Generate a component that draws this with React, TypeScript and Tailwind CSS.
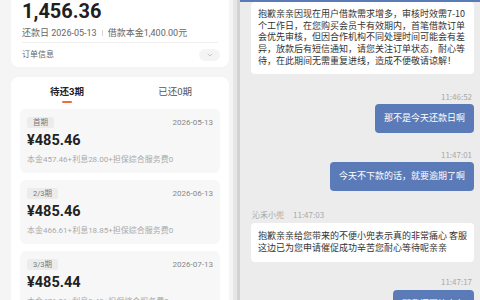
import { ChevronDown } from 'lucide-react'

const items = [
  { tag: '首期', date: '2026-05-13', amount: '¥485.46', detail: '本金457.46+利息28.00+担保综合服务费0' },
  { tag: '2/3期', date: '2026-06-13', amount: '¥485.46', detail: '本金466.61+利息18.85+担保综合服务费0' },
  { tag: '3/3期', date: '2026-07-13', amount: '¥485.44', detail: '本金476.01+利息9.43+担保综合服务费0' },
]

const firstMsg = [
  '抱歉亲亲因现在用户借款需求增多，审核时效需7-10',
  '个工作日，在您购买会员卡有效期内，首笔借款订单',
  '会优先审核，但因合作机构不同处理时间可能会有差',
  '异，放款后有短信通知，请您关注订单状态，耐心等',
  '待，在此期间无需重复进线，造成不便敬请谅解！',
]

function Stamp({ t }: { t: string }) {
  return <div className="text-right text-[8px] leading-[10px] text-[#a8a8a8] pr-[2px]">{t}</div>
}

function Mine({ text, cls }: { text: string; cls: string }) {
  return (
    <div className="flex justify-end">
      <div className={`bg-[#5b7bb8] text-white text-[9px] rounded-[4px] px-[9px] h-[29px] flex items-center whitespace-nowrap ${cls}`}>
        {text}
      </div>
    </div>
  )
}

export default function App() {
  return (
    <div
      className="w-[480px] h-[300px] overflow-hidden flex bg-[#ececec]"
      style={{ fontFamily: 'Roboto, "Noto Sans CJK SC", sans-serif' }}
    >
      {/* left: repayment plan */}
      <div className="w-[233px] shrink-0 bg-[#f5f5f5] pl-[11px] pr-[4px]">
        <div className="bg-white rounded-b-[8px] px-[11px]">
          <div className="text-[20px] leading-[24px] font-bold text-[#1f1f1f] -mt-[1px]">1,456.36</div>
          <div className="mt-[4px] pb-[3px] border-b border-[#f0f0f0] text-[9px] leading-[12px] text-[#666] flex items-center whitespace-nowrap">
            <span>还款日 2026-05-13</span>
            <span className="mx-[5px] w-px h-[6px] bg-[#d4d4d4]" />
            <span>借款本金1,400.00元</span>
          </div>
          <div className="h-[24px] flex items-center justify-between">
            <span className="text-[8px] text-[#666]">订单信息</span>
            <span className="w-[21px] h-[12px] rounded-full bg-[#f4f4f4] flex items-center justify-center -mr-[2px]">
              <ChevronDown size={8} strokeWidth={1.5} className="text-[#999]" />
            </span>
          </div>
        </div>

        <div className="mt-[10px] bg-white rounded-[8px] px-[9px] pb-[10px]">
          <div className="h-[32px] flex justify-between items-start pl-[30px] pr-[28px] pt-[8px]">
            <div className="flex flex-col items-center">
              <span className="text-[9.5px] leading-[14px] font-bold text-[#222]">待还3期</span>
              <span className="mt-[2px] w-[10px] h-[2px] rounded-full bg-[#f26a2e]" />
            </div>
            <span className="text-[9.5px] leading-[14px] text-[#555]">已还0期</span>
          </div>
          <div className="flex flex-col gap-[7px]">
            {items.map((it) => (
              <div key={it.tag} className="bg-[#f7f7f7] rounded-[6px] px-[7px] pt-[8px] pb-[7px]">
                <div className="h-[11px] flex items-center justify-between">
                  <span className="h-[11px] px-[6px] bg-[#ececec] rounded-[2px] text-[7.5px] leading-[11px] text-[#777]">{it.tag}</span>
                  <span className="text-[8px] text-[#888]">{it.date}</span>
                </div>
                <div className="mt-[4px] text-[14.5px] leading-[18px] font-bold text-[#222]">{it.amount}</div>
                <div className="mt-[4px] text-[8px] leading-[12px] text-[#aaa] whitespace-nowrap">{it.detail}</div>
              </div>
            ))}
          </div>
        </div>
      </div>

      <div className="w-[4px] shrink-0 bg-[#e6e6e6]" />
      <div className="w-[3px] shrink-0 bg-[#d2d2d2]" />

      {/* right: chat */}
      <div className="flex-1 bg-[#ececec]" style={{ fontFamily: '"Noto Sans CJK SC", sans-serif' }}>
        <div className="h-[2px] bg-[#5b7bb8]" />
        <div className="pl-[11px] pr-[12px]">
          <div className="bg-white rounded-[4px] px-[7px] pt-[6px] pb-[7px] text-[9px] leading-[11.7px] text-[#333]">
            {firstMsg.map((l) => (
              <div key={l} className="whitespace-nowrap">{l}</div>
            ))}
          </div>

          <div className="mt-[18px]"><Stamp t="11:46:52" /></div>
          <div className="mt-[2px]"><Mine text="那不是今天还款日啊" cls="" /></div>

          <div className="mt-[17px]"><Stamp t="11:47:01" /></div>
          <div className="mt-[2px]"><Mine text="今天不下款的话，就要逾期了啊" cls="" /></div>

          <div className="mt-[19px] text-[8px] leading-[10px] text-[#a8a8a8] pl-[1px] flex gap-[9px]">
            <span>沁禾小兜</span>
            <span>11:47:03</span>
          </div>
          <div className="mt-[3px] bg-white rounded-[4px] px-[7px] pt-[7px] pb-[8px] text-[9px] leading-[12px] text-[#333]">
            <div className="whitespace-nowrap">抱歉亲亲给您带来的不便小兜表示真的非常痛心 客服</div>
            <div className="whitespace-nowrap">这边已为您申请催促成功辛苦您耐心等待呢亲亲</div>
          </div>

          <div className="mt-[15px]"><Stamp t="11:47:17" /></div>
          <div className="mt-[3px]"><Mine text="那我还要等多久" cls="" /></div>
        </div>
      </div>
    </div>
  )
}
